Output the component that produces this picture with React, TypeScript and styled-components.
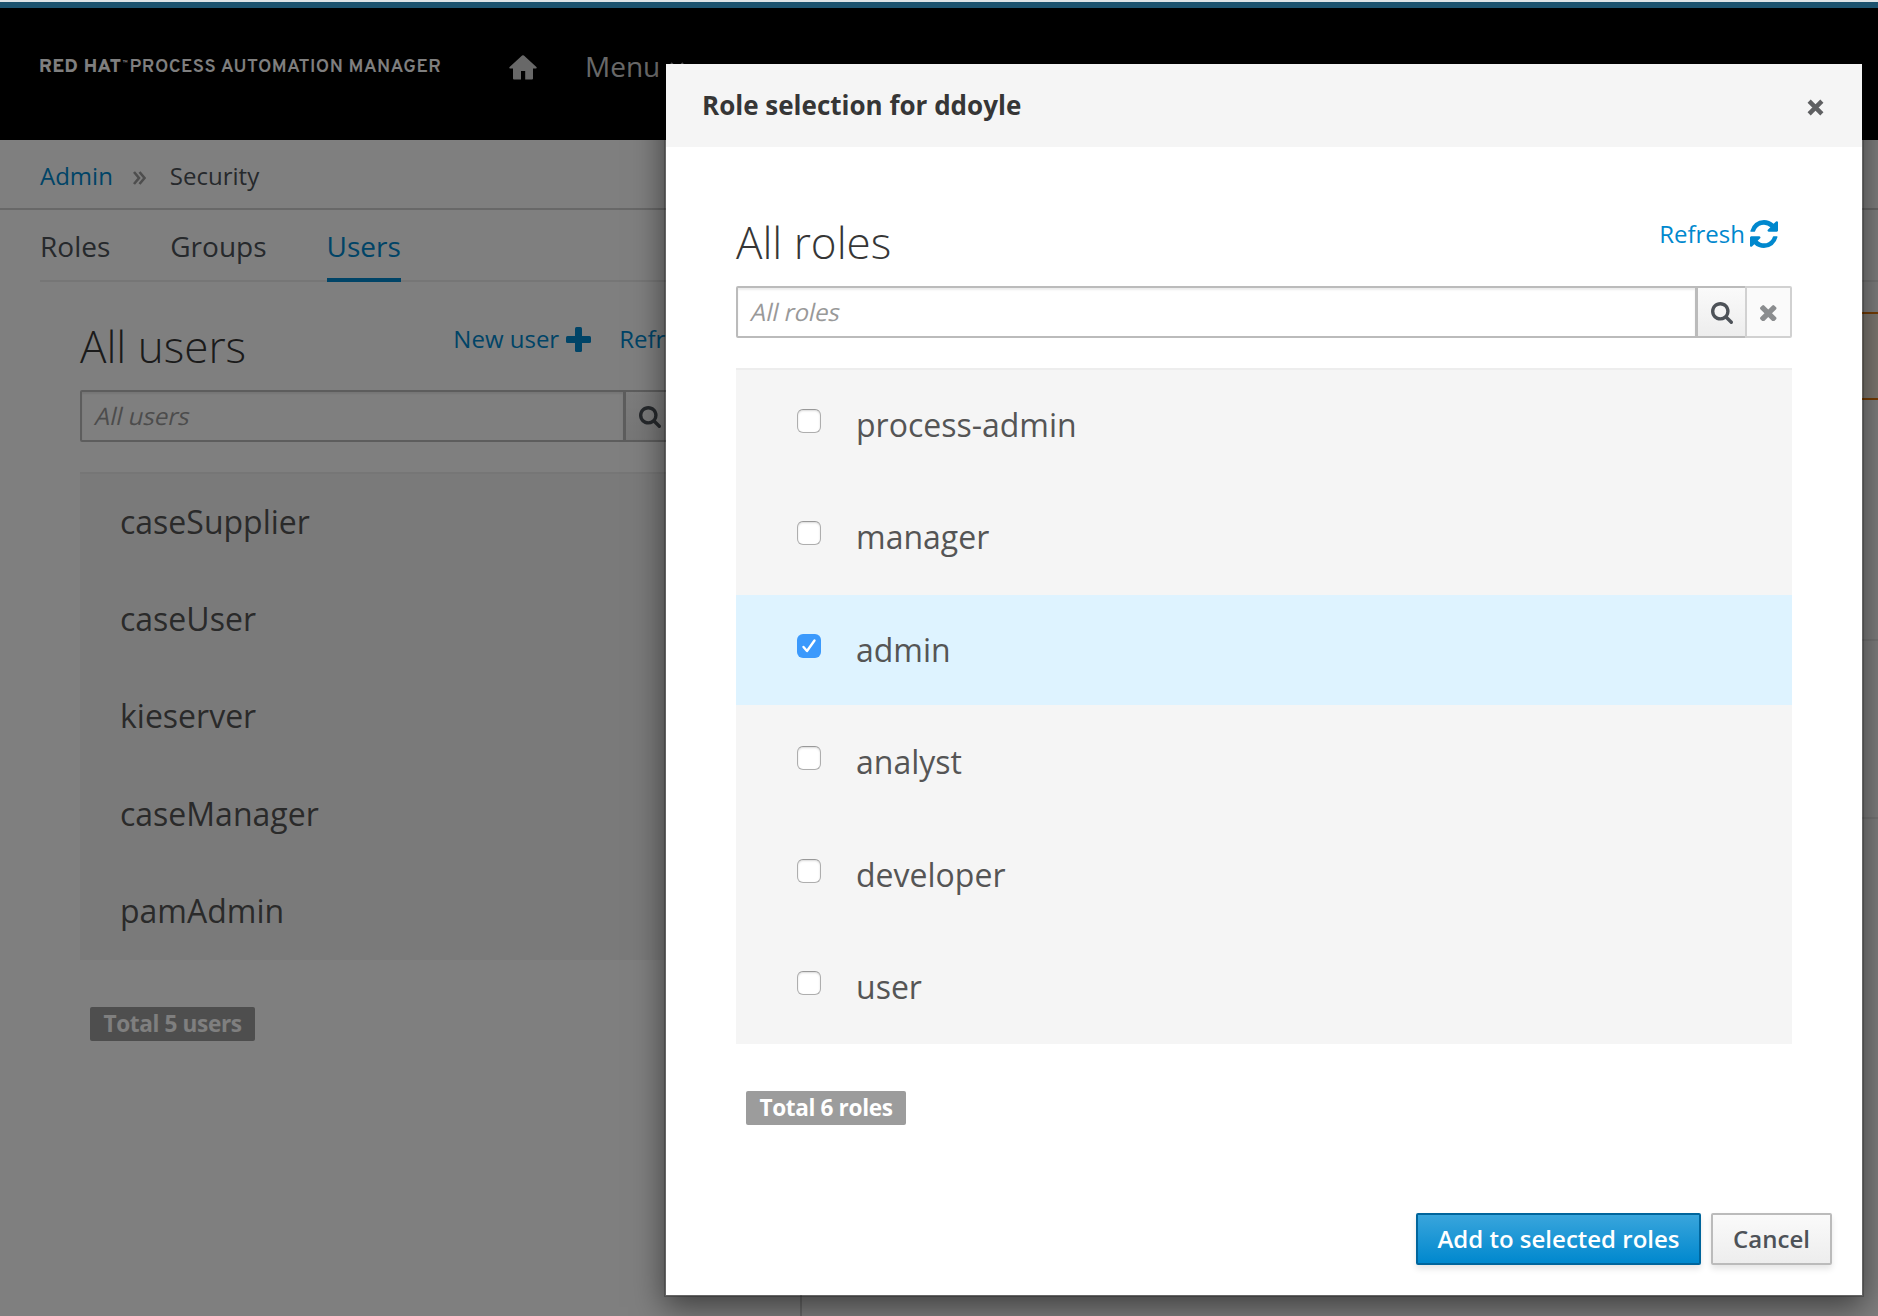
import React from 'react';
import styled, { createGlobalStyle, css } from 'styled-components';

const Global = createGlobalStyle`
  *, *::before, *::after { box-sizing: border-box; }
  html, body { margin: 0; padding: 0; }
  body {
    background: #fff;
    color: #363636;
    font-family: "Open Sans", "Noto Sans", sans-serif;
    font-size: 24px;
    overflow: hidden;
  }
  button { font: inherit; color: inherit; }
`;

const Page = styled.div`
  position: relative;
  width: 1878px;
  height: 1316px;
  overflow: hidden;
  display: flex;
  flex-direction: column;
  background: #fff;
`;

const WindowEdge = styled.div`
  height: 2px;
  flex: none;
  background: #dfe3e6;
`;

const Navbar = styled.header`
  flex: none;
  height: 138px;
  border-top: 6px solid #39a5dc;
  background: #000;
  display: flex;
  align-items: flex-start;
  padding: 42px 0 0 39px;
`;

const Brand = styled.div`
  font-family: "Overpass", "Open Sans", sans-serif;
  font-size: 18.5px;
  line-height: 32px;
  font-weight: 600;
  letter-spacing: 0.52px;
  color: #fff;
  white-space: nowrap;
  width: 470px;
  padding-top: 2px;
  b { font-weight: 800; }
  small { font-size: 6px; line-height: 0; vertical-align: 8px; margin: 0 -3px 0 1px; letter-spacing: 0; }
`;

const HomeLink = styled.a`
  width: 76px;
  color: #d1d1d1;
  svg { display: block; margin-top: 4px; }
`;

const MenuLink = styled.a`
  color: #d1d1d1;
  font-size: 28px;
  line-height: 32px;
  display: flex;
  align-items: center;
  gap: 9px;
  svg { margin-top: 2px; }
`;

const Breadcrumb = styled.nav`
  flex: none;
  height: 70px;
  border-bottom: 2px solid #d1d1d1;
  padding: 2px 0 0 40px;
  display: flex;
  align-items: center;
  color: #4d5258;
  a { color: #0088ce; }
  svg { margin: 5px 24px 0 20px; }
`;

const Tabs = styled.div`
  flex: none;
  height: 72px;
  margin-left: 40px;
  border-bottom: 2px solid #ededed;
  display: flex;
  gap: 60px;
  color: #4d5258;
`;

const Tab = styled.a<{ $active?: boolean }>`
  font-size: 28px;
  line-height: 72px;
  height: 72px;
  ${(p) => p.$active && css`
    color: #0088ce;
    border-bottom: 4px solid #0088ce;
  `}
`;

const Columns = styled.div`
  flex: 1;
  display: flex;
`;

const UsersColumn = styled.section`
  flex: none;
  width: 802px;
  padding: 29px 80px 0 80px;
  border-right: 2px solid #d1d1d1;
`;

const DetailColumn = styled.section`
  flex: 1;
  padding-top: 30px;
`;

const Warning = styled.div`
  height: 88px;
  border: 2px solid #ec7a08;
  border-right: 0;
  background: #fdf2e5;
  margin-left: 40px;
`;

const Divider = styled.hr<{ $gap: number }>`
  border: 0;
  height: 2px;
  background: #ededed;
  margin: ${(p) => p.$gap}px 0 0 40px;
`;

const PanelHead = styled.div`
  display: flex;
  justify-content: space-between;
  align-items: flex-start;
  height: 79px;
`;

const Title = styled.h1`
  margin: 0;
  font-weight: 300;
  font-size: 44px;
  line-height: 70px;
  white-space: nowrap;
`;

const Actions = styled.div<{ $right: number; $top: number }>`
  display: flex;
  gap: 28px;
  margin: ${(p) => p.$top}px ${(p) => p.$right}px 0 0;
`;

const Action = styled.a<{ $gap: number }>`
  display: flex;
  align-items: center;
  gap: ${(p) => p.$gap}px;
  color: #0088ce;
  line-height: 34px;
  height: 34px;
  white-space: nowrap;
`;

const SearchRow = styled.div`
  display: flex;
  height: 52px;
`;

const SearchField = styled.div`
  flex: 1;
  min-width: 0;
  height: 52px;
  border: 2px solid #bbb;
  border-radius: 2px 0 0 2px;
  padding: 0 14px;
  box-shadow: inset 0 2px 2px rgba(3, 3, 3, 0.075);
  background: #fff;
  color: #999;
  line-height: 47px;
`;

const Placeholder = styled.span`
  display: inline-block;
  transform: skewX(-13deg);
`;

const AddOn = styled.button<{ $w: number; $muted?: boolean }>`
  width: ${(p) => p.$w}px;
  height: 52px;
  padding: 2px 0 0;
  display: flex;
  align-items: center;
  justify-content: center;
  border: 2px solid ${(p) => (p.$muted ? '#d1d1d1' : '#bbb')};
  border-left-width: ${(p) => (p.$muted ? 2 : 1)}px;
  border-right-width: ${(p) => (p.$muted ? 2 : 0)}px;
  border-radius: ${(p) => (p.$muted ? '0 2px 2px 0' : '0')};
  background: ${(p) => (p.$muted ? '#fafafa' : 'linear-gradient(#fafafa, #ededed)')};
`;

const List = styled.ul`
  list-style: none;
  margin: 30px 0 0;
  padding: 0;
  border-top: 2px solid #ededed;
  background: #f5f5f5;
  color: #555;
`;

const UserRow = styled.li`
  height: 97.2px;
  padding-left: 40px;
  font-size: 32px;
  line-height: 95px;
`;

const RoleRow = styled.li<{ $selected?: boolean }>`
  height: 112.4px;
  border-bottom: 2px solid #f5f5f5;
  background: ${(p) => (p.$selected ? '#def3ff' : '#f5f5f5')};
  padding-left: 61px;
  display: flex;
  gap: 35px;
  font-size: 32px;
  line-height: 109px;
`;

const Check = styled.span<{ $on?: boolean }>`
  flex: none;
  width: 24px;
  height: 24px;
  margin-top: 39px;
  border-radius: 6px;
  display: flex;
  align-items: center;
  justify-content: center;
  ${(p) => p.$on
    ? css`background: #3b99fc;`
    : css`background: #fff; border: 1px solid #aeaeae; border-top-color: #999; box-shadow: inset 0 1px 2px rgba(0, 0, 0, 0.15);`}
`;

const Badge = styled.span`
  display: inline-block;
  margin: 46.6px 0 0 10px;
  padding: 0 13.5px;
  height: 34px;
  line-height: 33px;
  border-radius: 2px;
  background: #9c9c9c;
  color: #fff;
  font-weight: 700;
  font-size: 22.6px;
  letter-spacing: -0.37px;
  white-space: nowrap;
`;

const Backdrop = styled.div`
  position: absolute;
  inset: 2px 0 0 0;
  background: rgba(0, 0, 0, 0.5);
`;

const Modal = styled.div`
  position: absolute;
  left: 664px;
  top: 62px;
  width: 1200px;
  height: 1235px;
  background: #fff;
  background-clip: padding-box;
  border: 2px solid rgba(0, 0, 0, 0.2);
  box-shadow: 0 10px 30px rgba(0, 0, 0, 0.5);
  display: flex;
  flex-direction: column;
`;

const ModalHeader = styled.header`
  flex: none;
  height: 83px;
  background: #f5f5f5;
  padding: 0 38px 0 36px;
  display: flex;
  align-items: center;
  justify-content: space-between;
  svg { margin-top: 3px; }
`;

const ModalTitle = styled.h2`
  margin: 0;
  font-size: 26px;
  line-height: 83px;
  font-weight: 700;
`;

const ModalBody = styled.div`
  flex: 1;
  padding: 60px 70px 0;
`;

const ModalFooter = styled.footer`
  flex: none;
  display: flex;
  justify-content: flex-end;
  gap: 10px;
  padding: 0 30px 30px 0;
`;

const Button = styled.button<{ $primary?: boolean; $w: number }>`
  width: ${(p) => p.$w}px;
  height: 52px;
  padding: 0;
  line-height: 48px;
  font-weight: 600;
  border-radius: 2px;
  white-space: nowrap;
  box-shadow: 0 4px 6px rgba(3, 3, 3, 0.1);
  ${(p) => p.$primary
    ? css`background: linear-gradient(#39a5dc, #0088ce); border: 2px solid #00659c; color: #fff;`
    : css`background: linear-gradient(#fafafa, #ededed); border: 2px solid #bbb; color: #4d5258;`}
`;

const HomeIcon = () => (
  <svg width="28" height="26" viewBox="0 0 28 26" fill="currentColor">
    <path d="M13.1 1.600 Q14 0.700 14.900 1.600 L27.400 13 Q28.300 14.300 26.900 14.500 H24 V24.500 Q24 25.500 23 25.500 H16.200 V17 H12 V25.500 H5 Q4 25.500 4 24.500 V14.500 H1.100 Q-0.300 14.300 0.600 13 Z" />
  </svg>
);

const PlusIcon = () => (
  <svg width="25" height="25" viewBox="0 0 25 25" fill="#0088ce">
    <rect x="9" y="0" width="7" height="25" rx="1.500" />
    <rect x="0" y="9" width="25" height="7" rx="1.500" />
  </svg>
);

const SearchIcon = () => (
  <svg width="22" height="22" viewBox="0 128 1664 1664" fill="#4d5258">
    <path d="M1152 832q0-185-131.500-316.500t-316.500-131.500-316.500 131.500-131.500 316.500 131.500 316.500 316.500 131.500 316.500-131.500 131.500-316.500zm512 832q0 52-38 90t-90 38q-54 0-90-38l-343-342q-179 124-399 124-143 0-273.500-55.500t-225-150-150-225-55.500-273.500 55.500-273.500 150-225 225-150 273.500-55.500 273.500 55.500 225 150 150 225 55.500 273.500q0 220-124 399l343 343q37 37 37 90z" />
  </svg>
);

const ClearIcon = () => (
  <svg width="16.500" height="16.500" viewBox="110 258 1188 1188" fill="#8b8d8f">
    <path d="M1298 1214q0 40-28 68l-136 136q-28 28-68 28t-68-28l-294-294-294 294q-28 28-68 28t-68-28l-136-136q-28-28-28-68t28-68l294-294-294-294q-28-28-28-68t28-68l136-136q28-28 68-28t68 28l294 294 294-294q28-28 68-28t68 28l136 136q28 28 28 68t-28 68l-294 294 294 294q28 28 28 68z" />
  </svg>
);

const CloseIcon = () => (
  <svg width="17" height="17" viewBox="0 0 16 16" fill="none" stroke="#5f6062" strokeWidth="4.200">
    <path d="M2 2 L14 14 M14 2 L2 14" />
  </svg>
);

const RefreshIcon = () => (
  <svg width="28" height="28" viewBox="0 0 1536 1536" fill="#0088ce">
    <path d="M1511 928q0 5-1 7-64 268-268 434.500t-478 166.500q-146 0-282.500-55t-243.500-157l-129 129q-19 19-45 19t-45-19-19-45v-448q0-26 19-45t45-19h448q26 0 45 19t19 45-19 45l-137 137q71 66 161 102t187 36q134 0 250-65t186-179q11-17 53-117 8-23 30-23h192q13 0 22.500 9.500t9.500 22.500zm25-800v448q0 26-19 45t-45 19h-448q-26 0-45-19t-19-45 19-45l138-138q-148-137-349-137-134 0-250 65t-186 179q-11 17-53 117-8 23-30 23h-199q-13 0-22.500-9.500t-9.500-22.500v-7q65-268 270-434.500t480-166.500q146 0 284 55.500t245 156.500l130-129q19-19 45-19t45 19 19 45z" />
  </svg>
);

const users = ['caseSupplier', 'caseUser', 'kieserver', 'caseManager', 'pamAdmin'];
const roles = ['process-admin', 'manager', 'admin', 'analyst', 'developer', 'user'];

function Search({ placeholder }: { placeholder: string }) {
  return (
    <SearchRow>
      <SearchField><Placeholder>{placeholder}</Placeholder></SearchField>
      <AddOn $w={48}><SearchIcon /></AddOn>
      <AddOn $w={47} $muted><ClearIcon /></AddOn>
    </SearchRow>
  );
}

export default function App() {
  return (
    <>
      <Global />
      <Page>
        <WindowEdge />
        <Navbar>
          <Brand><b>RED HAT</b><small>™</small> PROCESS AUTOMATION MANAGER</Brand>
          <HomeLink><HomeIcon /></HomeLink>
          <MenuLink>Menu
            <svg width="16" height="10" viewBox="0 0 16 10" fill="none" stroke="#d1d1d1" strokeWidth="2"><path d="M2 1 L8 7 L14 1" /></svg>
          </MenuLink>
        </Navbar>
        <Breadcrumb>
          <a>Admin</a>
          <svg width="13" height="14" viewBox="0 0 13 14" fill="none" stroke="#9c9c9c" strokeWidth="2.600"><path d="M1 1 L6 7 L1 13 M6.500 1 L11.500 7 L6.500 13" /></svg>
          <span>Security</span>
        </Breadcrumb>
        <Tabs>
          <Tab>Roles</Tab>
          <Tab>Groups</Tab>
          <Tab $active>Users</Tab>
        </Tabs>
        <Columns>
          <UsersColumn>
            <PanelHead>
              <Title>All users</Title>
              <Actions $top={11} $right={-18}>
                <Action $gap={7}>New user <PlusIcon /></Action>
                <Action $gap={5}>Refresh <RefreshIcon /></Action>
              </Actions>
            </PanelHead>
            <Search placeholder="All users" />
            <List>
              {users.map((u) => <UserRow key={u}>{u}</UserRow>)}
            </List>
            <Badge>Total 5 users</Badge>
          </UsersColumn>
          <DetailColumn>
            <Warning />
            <Divider $gap={239} />
            <Divider $gap={176} />
          </DetailColumn>
        </Columns>
        <Backdrop />
        <Modal role="dialog">
          <ModalHeader>
            <ModalTitle>Role selection for ddoyle</ModalTitle>
            <CloseIcon />
          </ModalHeader>
          <ModalBody>
            <PanelHead>
              <Title>All roles</Title>
              <Actions $top={10} $right={14}>
                <Action $gap={5}>Refresh <RefreshIcon /></Action>
              </Actions>
            </PanelHead>
            <Search placeholder="All roles" />
            <List>
              {roles.map((r) => (
                <RoleRow key={r} $selected={r === 'admin'}>
                  <Check $on={r === 'admin'}>
                    {r === 'admin' && (
                      <svg width="16" height="16" viewBox="0 0 16 16" fill="none" stroke="#fff" strokeWidth="2.400" strokeLinecap="round" strokeLinejoin="round"><path d="M2.500 9 L6 13 L13.500 2.500" /></svg>
                    )}
                  </Check>
                  {r}
                </RoleRow>
              ))}
            </List>
            <Badge>Total 6 roles</Badge>
          </ModalBody>
          <ModalFooter>
            <Button $primary $w={285}>Add to selected roles</Button>
            <Button $w={121}>Cancel</Button>
          </ModalFooter>
        </Modal>
      </Page>
    </>
  );
}
